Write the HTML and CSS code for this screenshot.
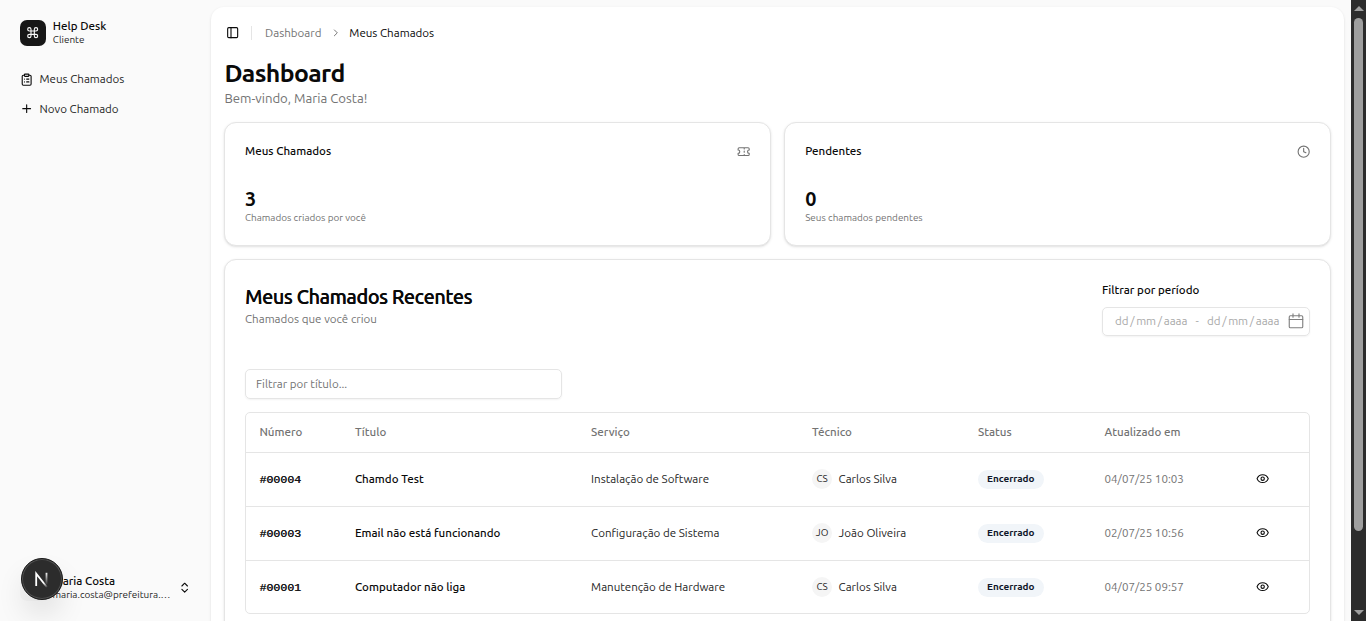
FILE: index.html
```html
<!DOCTYPE html>
<html lang="pt-BR">
<head>
<meta charset="utf-8">
<title>Help Desk</title>
<link rel="stylesheet" href="styles.css">
</head>
<body>
<svg class="defs" width="0" height="0">
  <symbol id="eye" viewBox="0 0 24 24"><path d="M2.062 12.348a1 1 0 0 1 0-.696 10.75 10.75 0 0 1 19.876 0 1 1 0 0 1 0 .696 10.75 10.75 0 0 1-19.876 0"/><circle cx="12" cy="12" r="3"/></symbol>
</svg>
<div class="app">
  <aside class="sidebar">
    <div class="brand">
      <div class="brand-logo"><svg class="icon" viewBox="0 0 24 24"><path d="M15 6v12a3 3 0 1 0 3-3H6a3 3 0 1 0 3 3V6a3 3 0 1 0-3 3h12a3 3 0 1 0-3-3"/></svg></div>
      <div class="stack"><span class="name">Help Desk</span><span class="small">Cliente</span></div>
    </div>
    <nav class="nav">
      <a class="nav-item"><svg class="icon" viewBox="0 0 24 24"><rect width="8" height="4" x="8" y="2" rx="1" ry="1"/><path d="M16 4h2a2 2 0 0 1 2 2v14a2 2 0 0 1-2 2H6a2 2 0 0 1-2-2V6a2 2 0 0 1 2-2h2M12 11h4M12 16h4M8 11h.01M8 16h.01"/></svg>Meus Chamados</a>
      <a class="nav-item"><svg class="icon" viewBox="0 0 24 24"><path d="M5 12h14M12 5v14"/></svg>Novo Chamado</a>
    </nav>
    <div class="user">
      <div class="user-avatar"></div>
      <div class="stack user-text"><span class="name">Maria Costa</span><span class="small">maria.costa@prefeitura.…</span></div>
      <svg class="icon" viewBox="0 0 24 24"><path d="m7 15 5 5 5-5M7 9l5-5 5 5"/></svg>
    </div>
  </aside>

  <main class="panel">
    <header class="topbar">
      <svg class="icon" viewBox="0 0 24 24"><rect width="18" height="18" x="3" y="3" rx="2"/><path d="M9 3v18"/></svg>
      <span class="separator"></span>
      <span class="crumb">Dashboard</span>
      <svg class="icon chevron" viewBox="0 0 24 24"><path d="m9 18 6-6-6-6"/></svg>
      <span class="crumb-current">Meus Chamados</span>
    </header>

    <h1 class="title">Dashboard</h1>
    <p class="welcome">Bem-vindo, Maria Costa!</p>

    <section class="stats">
      <article class="card stat">
        <div class="stat-head"><span>Meus Chamados</span><svg class="icon muted" viewBox="0 0 24 24"><path d="M2 9a3 3 0 0 1 0 6v2a2 2 0 0 0 2 2h16a2 2 0 0 0 2-2v-2a3 3 0 0 1 0-6V7a2 2 0 0 0-2-2H4a2 2 0 0 0-2 2ZM13 5v2M13 17v2M13 11v2"/></svg></div>
        <div class="stat-value">3</div>
        <div class="stat-note">Chamados criados por você</div>
      </article>
      <article class="card stat">
        <div class="stat-head"><span>Pendentes</span><svg class="icon muted" viewBox="0 0 24 24"><circle cx="12" cy="12" r="10"/><path d="M12 6v6l4 2"/></svg></div>
        <div class="stat-value">0</div>
        <div class="stat-note">Seus chamados pendentes</div>
      </article>
    </section>

    <section class="card recent">
      <div class="recent-head">
        <div>
          <h2 class="recent-title">Meus Chamados Recentes</h2>
          <p class="recent-sub">Chamados que você criou</p>
        </div>
        <div class="period">
          <div class="period-label">Filtrar por período</div>
          <div class="period-field">
            <span class="date"><i>dd</i><i>/</i><i>mm</i><i>/</i><i>aaaa</i></span>
            <span class="dash">-</span>
            <span class="date"><i>dd</i><i>/</i><i>mm</i><i>/</i><i>aaaa</i></span>
            <svg class="icon calendar" viewBox="0 0 24 24"><rect x="3" y="5" width="18" height="16" rx="1.5"/><path d="M3 10h18M8 2.5V7M16 2.5V7"/></svg>
          </div>
        </div>
      </div>
      <div class="search">Filtrar por título...</div>
      <div class="table">
        <div class="row head"><span>Número</span><span>Título</span><span>Serviço</span><span>Técnico</span><span>Status</span><span>Atualizado em</span><span></span></div>
        <div class="row"><span class="num">#00004</span><span class="strong">Chamdo Test</span><span>Instalação de Software</span><span class="tech"><b class="initials">CS</b>Carlos Silva</span><span class="status"><b class="badge">Encerrado</b></span><span class="when">04/07/25 10:03</span><svg class="icon"><use href="#eye"/></svg></div>
        <div class="row"><span class="num">#00003</span><span class="strong">Email não está funcionando</span><span>Configuração de Sistema</span><span class="tech"><b class="initials">JO</b>João Oliveira</span><span class="status"><b class="badge">Encerrado</b></span><span class="when">02/07/25 10:56</span><svg class="icon"><use href="#eye"/></svg></div>
        <div class="row"><span class="num">#00001</span><span class="strong">Computador não liga</span><span>Manutenção de Hardware</span><span class="tech"><b class="initials">CS</b>Carlos Silva</span><span class="status"><b class="badge">Encerrado</b></span><span class="when">04/07/25 09:57</span><svg class="icon"><use href="#eye"/></svg></div>
      </div>
    </section>
  </main>

  <div class="scrollbar"><span class="arrow up"></span><span class="thumb"></span><span class="arrow down"></span></div>
</div>
<div class="dev-badge"><svg viewBox="0 0 40 40" width="40" height="40">
  <defs>
    <linearGradient id="g1" x1="20" y1="20" x2="26" y2="28" gradientUnits="userSpaceOnUse"><stop offset=".4" stop-color="#fff"/><stop offset="1" stop-color="#fff" stop-opacity="0"/></linearGradient>
    <linearGradient id="g2" x1="0" y1="13" x2="0" y2="26" gradientUnits="userSpaceOnUse"><stop stop-color="#fff"/><stop offset="1" stop-color="#fff" stop-opacity="0"/></linearGradient>
  </defs>
  <path d="M14.2 27V14.6L25 28.2" fill="none" stroke="url(#g1)" stroke-width="1.8"/>
  <path d="M24.5 13.8V25.5" fill="none" stroke="url(#g2)" stroke-width="1.8"/>
</svg></div>
</body>
</html>
```
FILE: styles.css
```css
* { box-sizing: border-box; }
body {
  margin: 0;
  height: 621px;
  overflow: hidden;
  background: #fafafa;
  color: #0a0a0a;
  font: 400 11.57px/16.6px Ubuntu, "Noto Sans", sans-serif;
}
h1, h2, p { margin: 0; }
i, b { font-style: normal; font-weight: inherit; }
.defs { display: block; height: 0; }
.icon {
  width: 13.33px;
  height: 13.33px;
  flex: none;
  fill: none;
  stroke: currentColor;
  stroke-width: 2;
  stroke-linecap: round;
  stroke-linejoin: round;
}
.muted { color: #737373; }

.app { display: flex; height: 621px; overflow: hidden; }

/* Sidebar */
.sidebar {
  width: 211px;
  flex: none;
  display: flex;
  flex-direction: column;
  padding: 13px 13px 13.5px;
}
.brand { display: flex; align-items: center; gap: 6.8px; height: 40px; padding-left: 7px; }
.brand .stack { padding-bottom: 1px; }
.brand .small { line-height: 13.5px; }
.brand-logo {
  width: 26px;
  height: 26px;
  border-radius: 7px;
  background: #171717;
  color: #fafafa;
  display: grid;
  place-items: center;
}
.stack { display: flex; flex-direction: column; line-height: 14px; }
.name { font-weight: 500; }
.small { font-size: 9.95px; line-height: 13px; color: #262626; }
.nav { display: flex; flex-direction: column; gap: 3.4px; margin-top: 13px; }
.nav-item { display: flex; align-items: center; gap: 6.5px; height: 26.4px; padding-left: 6.7px; color: #262626; }
.nav-item .icon { color: #0a0a0a; }
.user { display: flex; align-items: center; gap: 6.5px; height: 40px; margin-top: auto; padding: 0 7px; }
.user-avatar { width: 26px; height: 26px; border-radius: 7px; background: #f5f5f5; flex: none; }
.user-text { width: 118.5px; flex: none; padding-top: .5px; }
.user-text .small { white-space: nowrap; }

/* Main panel */
.panel {
  width: 1133px;
  flex: none;
  height: 780px;
  margin-top: 7px;
  padding: 0 13px;
  background: #fff;
  border-radius: 13px;
  box-shadow: 0 1px 3px rgba(0, 0, 0, .1), 0 1px 2px -1px rgba(0, 0, 0, .1);
}
.topbar { display: flex; align-items: center; height: 52px; padding-left: 2px; }
.separator { width: 1px; height: 13.5px; margin: 0 13.1px 0 11.7px; background: #e5e5e5; }
.crumb { color: #737373; }
.chevron { width: 11.7px; height: 11.7px; margin: 0 7.9px 0 8.3px; color: #737373; }
.title { font-size: 24.8px; line-height: 29px; font-weight: 700; letter-spacing: -.025em; padding-left: .4px; }
.welcome { font-size: 13.2px; line-height: 20px; color: #737373; padding: 0 0 1px .4px; }
.card {
  background: #fff;
  border: 1px solid #e5e5e5;
  border-radius: 12px;
  box-shadow: 0 1px 3px rgba(0, 0, 0, .1), 0 1px 2px -1px rgba(0, 0, 0, .1);
}
.stats { display: grid; grid-template-columns: 1fr 1fr; gap: 13.3px; margin-top: 13px; }
.stat { height: 124px; padding: 20px; }
.stat-head { display: flex; align-items: center; justify-content: space-between; height: 16.6px; font-weight: 500; }
.stat-value { margin-top: 26.6px; font-size: 19.8px; line-height: 26.6px; font-weight: 700; }
.stat-note { font-size: 9.92px; line-height: 13.3px; color: #737373; margin-top: -2px; }

/* Recent tickets */
.recent { height: 500px; margin-top: 13px; padding: 19.5px 20px 20px; }
.recent-head { display: flex; justify-content: space-between; height: 90px; }
.recent-title { font-size: 19.8px; line-height: 26.6px; margin-top: 4.5px; font-weight: 500; letter-spacing: -.019em; text-shadow: .3px 0 0 #0a0a0a; }
.recent-sub { color: #737373; margin-top: .5px; }
.period { width: 208px; }
.period-label { font-weight: 500; line-height: 20px; }
.period-field {
  display: flex;
  align-items: center;
  height: 29px;
  margin-top: 7px;
  padding: 0 4.5px 0 12px;
  border: 1px solid #e5e5e5;
  border-radius: 5px;
  box-shadow: 0 1px 2px rgba(0, 0, 0, .05);
  color: #a9a9a9;
}
.date { display: flex; width: 72.5px; justify-content: space-between; }
.dash { width: 19.5px; text-align: center; }
.calendar { width: 18px; height: 18px; margin-left: auto; color: #7f7f7f; stroke-width: 1.5; }
.search {
  width: 317px;
  height: 30px;
  padding: 0 10px;
  border: 1px solid #e5e5e5;
  border-radius: 5px;
  box-shadow: 0 1px 2px rgba(0, 0, 0, .05);
  line-height: 28px;
  color: #737373;
  margin-top: -1px;
}
.table { margin-top: 13px; border: 1px solid #e5e5e5; border-radius: 5px; }
.row {
  display: grid;
  grid-template-columns: 95.5px 236.2px 221px 166px 126.5px 151.3px 1fr;
  align-items: center;
  height: 54px;
  padding-left: 13.4px;
  border-top: 1px solid #e5e5e5;
  color: #262626;
}
.row:last-child { height: 53px; padding-top: 1px; }
.row.head { height: 39px; border-top: 0; font-weight: 500; color: #737373; }
.num { font: 400 11.57px/17px "Liberation Mono", monospace; color: #171717; text-shadow: .3px 0 0 #171717; }
.strong { font-weight: 500; color: #0a0a0a; }
.tech { display: flex; align-items: center; gap: 6.5px; }
.initials {
  width: 20px;
  height: 20px;
  border-radius: 50%;
  background: #f5f5f5;
  font-size: 9.92px;
  line-height: 19px;
  text-align: center;
}
.status { display: flex; }
.badge {
  height: 19px;
  padding: 0 9px;
  border-radius: 10px;
  background: #f1f5f9;
  color: #0f172a;
  font-size: 9.92px;
  line-height: 18px;
  font-weight: 600;
}
.when { color: #737373; }
.row .icon { color: #0a0a0a; }

/* Scrollbar */
.scrollbar {
  width: 15px;
  margin-left: auto;
  background: #2c2c2c;
  display: flex;
  flex-direction: column;
  align-items: center;
  padding: 6px 0;
}
.arrow { border: 5px solid transparent; }
.up { border-top: 0; border-bottom-color: #9f9f9f; }
.down { border-bottom: 0; border-top-color: #9f9f9f; margin-top: auto; }
.thumb { width: 9px; height: 513px; margin-top: 7px; border-radius: 5px; background: #9f9f9f; }

/* Floating badge over the user block */
.dev-badge {
  position: absolute;
  left: 21px;
  top: 558px;
  width: 42px;
  height: 42px;
  border-radius: 50%;
  background: #2c2c2c;
  border: 1px solid #1a1a1a;
  box-shadow: inset 0 0 0 1px #505050, 0 16px 32px -8px rgba(0, 0, 0, .24);
}
.dev-badge svg { display: block; }
```
